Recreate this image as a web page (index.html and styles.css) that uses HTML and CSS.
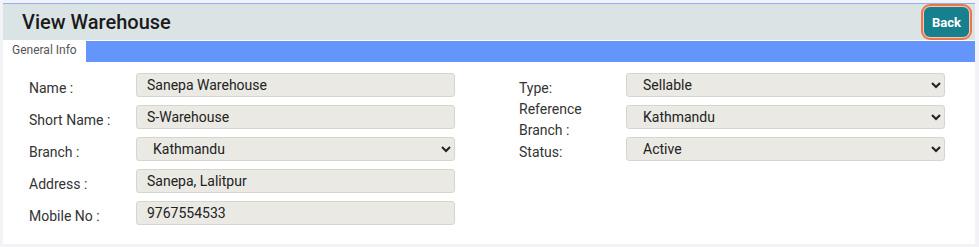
FILE: index.html
```html
<!DOCTYPE html>
<html lang="en">
  <head>
    <meta charset="UTF-8" />
    <meta name="viewport" content="width=device-width, initial-scale=1.0" />
    <title>View Warehouse</title>
    <link rel="stylesheet" href="styles.css">
  </head>
  <body>
    <div class="card">
      <div class="card-header">
        <h1>View Warehouse</h1>
        <button class="back-btn">Back</button>
      </div>

      <div class="tabs">
        <div class="tab active">General Info</div>
      </div>

      <div class="form-grid">
        <div class="form-col">
          <div class="form-row">
            <label>Name :</label>
            <input type="text" value="Sanepa Warehouse" readonly>
          </div>
          <div class="form-row">
            <label>Short Name :</label>
            <input type="text" value="S-Warehouse" readonly>
          </div>
          <div class="form-row">
            <label>Branch :</label>
            <select>
              <option selected>Kathmandu</option>
            </select>
          </div>
          <div class="form-row">
            <label>Address :</label>
            <input type="text" value="Sanepa, Lalitpur" readonly>
          </div>
          <div class="form-row">
            <label>Mobile No :</label>
            <input type="text" value="9767554533" readonly>
          </div>
        </div>

        <div class="form-col">
          <div class="form-row">
            <label>Type:</label>
            <select>
              <option selected>Sellable</option>
            </select>
          </div>
          <div class="form-row">
            <label>Reference Branch :</label>
            <select>
              <option selected>Kathmandu</option>
            </select>
          </div>
          <div class="form-row">
            <label>Status:</label>
            <select>
              <option selected>Active</option>
            </select>
          </div>
        </div>
      </div>
    </div>
  </body>
</html>
```

FILE: styles.css
```css
body {
  font-family: Roboto, "Liberation Sans", Arial, sans-serif;
  background-color: #f3f3f7;
  color: #333;
  margin: 0;
  padding: 3px 4px 0 3px;
}

.card {
  background-color: #fff;
  height: 240px;
  border-top: 1px solid #8fb0f5;
}

.card-header {
  display: flex;
  justify-content: space-between;
  align-items: center;
  background-color: #dbe4e5;
  height: 36px;
  padding: 0 6px 0 19px;
}

.card-header h1 {
  margin: 0;
  font-size: 20px;
  font-weight: 500;
  color: #1b1b1b;
}

.back-btn {
  background-color: #17808f;
  color: #fff;
  border: none;
  border-radius: 6px;
  font-family: inherit;
  font-size: 13px;
  font-weight: 700;
  height: 30px;
  padding: 0 8px;
  box-shadow: 0 0 0 1px #f4c9b8, 0 0 0 3px #ee7548;
}

.tabs {
  display: flex;
  background-color: #6495fa;
  height: 21px;
  margin-top: 1px;
}

.tab {
  font-size: 12px;
  color: #555;
  padding: 2px 9px 0 9px;
}

.tab.active {
  background-color: #fff;
}

.form-grid {
  display: grid;
  grid-template-columns: 1fr 1fr;
  column-gap: 64px;
  padding: 11px 30px 0 26px;
}

.form-col {
  display: flex;
  flex-direction: column;
  gap: 8px;
}

.form-row {
  display: flex;
  align-items: center;
  height: 24px;
}

.form-row label {
  flex: 0 0 107px;
  width: 107px;
  font-size: 14px;
  line-height: 21px;
  padding-top: 6px;
  padding-right: 15px;
  box-sizing: border-box;
}

.form-row input,
.form-row select {
  flex: 1;
  height: 24px;
  box-sizing: border-box;
  background-color: #eae9e3;
  border: 1px solid #d6d5cf;
  border-radius: 3px;
  font-family: inherit;
  font-size: 14px;
  color: #222;
  outline: none;
}

.form-row input {
  padding: 0 10px;
}

.form-row select {
  padding: 0 6px 0 12px;
}
```
